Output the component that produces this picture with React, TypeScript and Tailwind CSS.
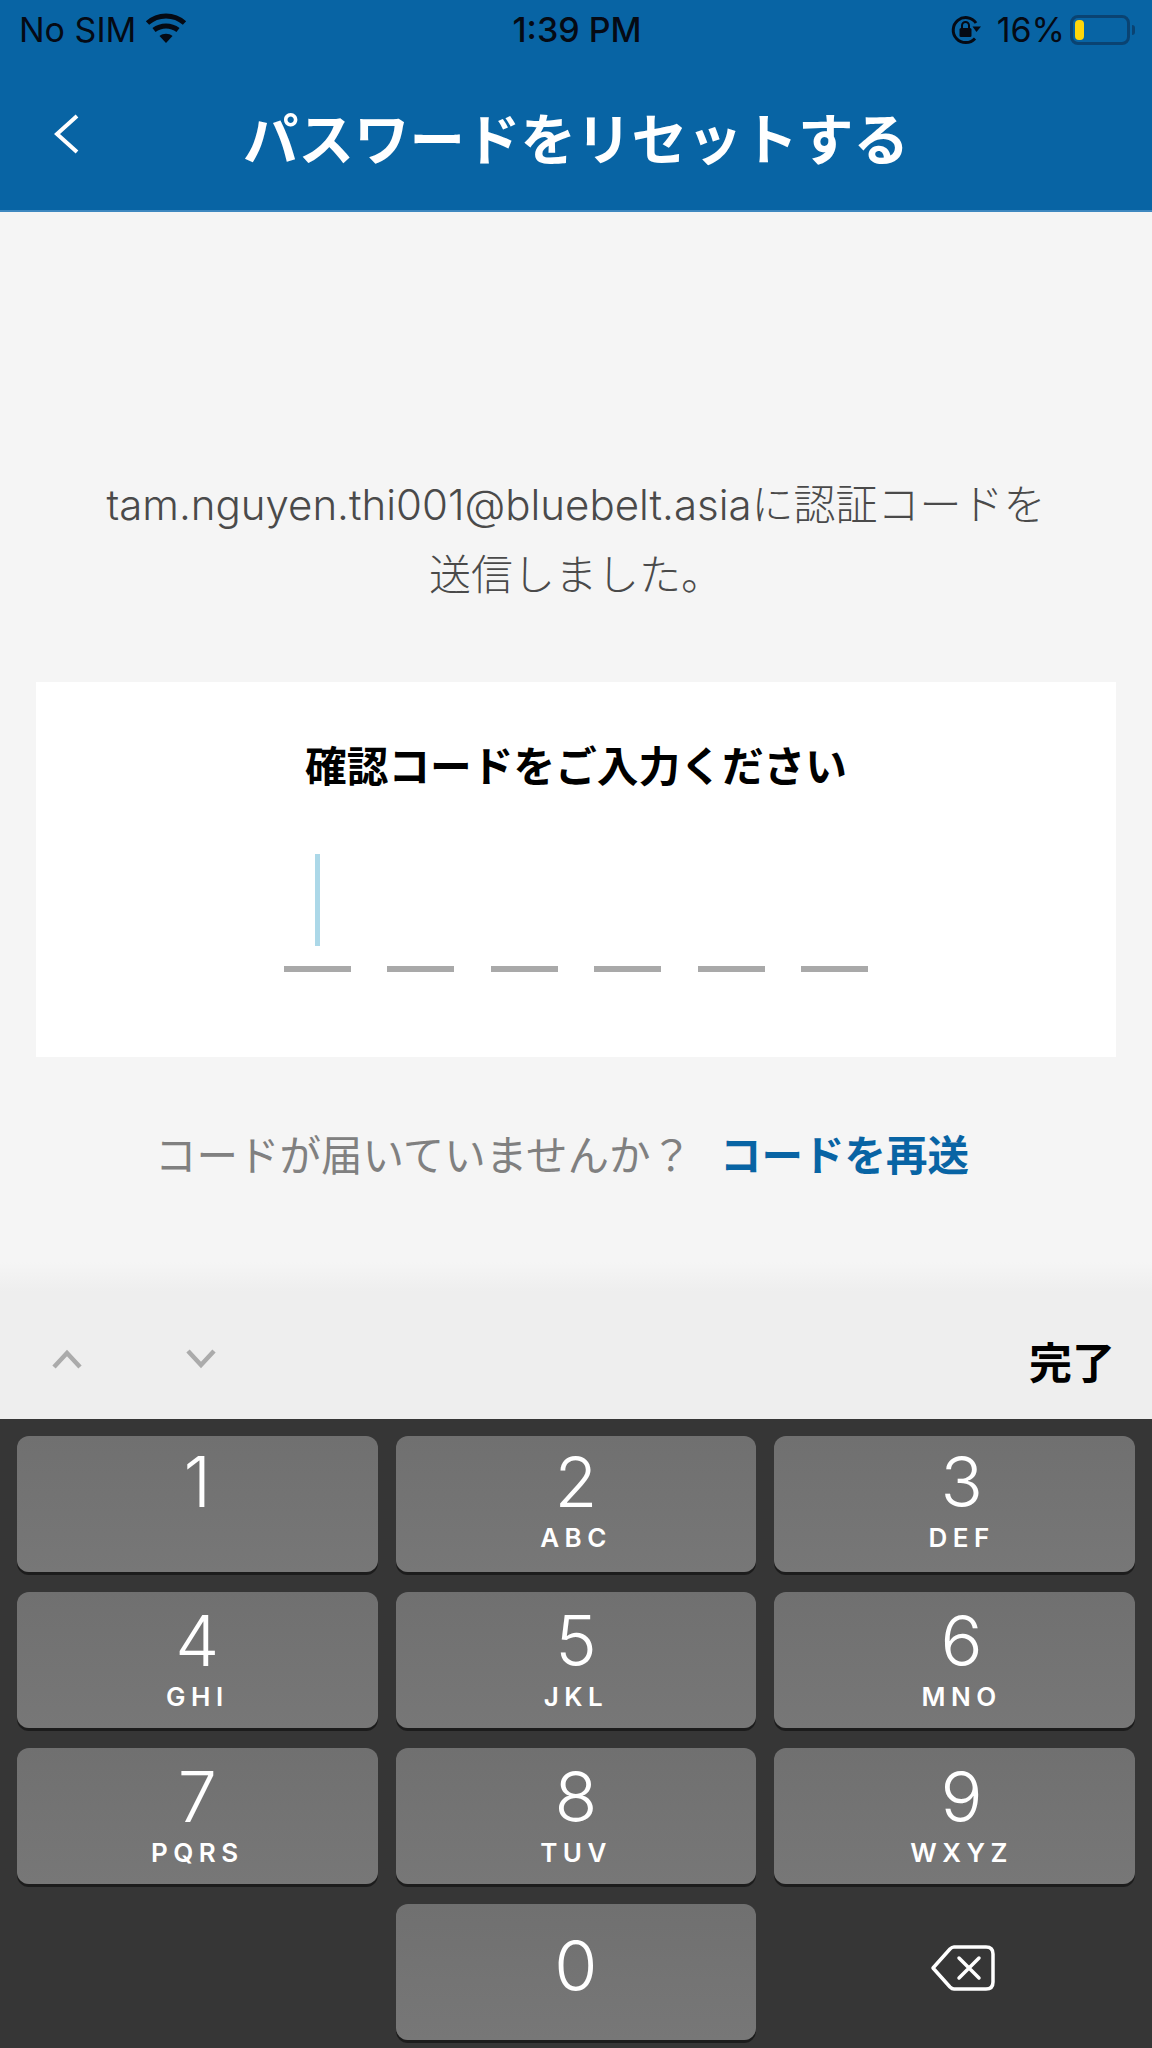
const font = { fontFamily: 'Inter, "Noto Sans CJK JP", sans-serif' };

function Wifi() {
  return (
    <svg className="mb-[5px]" width="42" height="32" viewBox="0 0 42 32" fill="none" stroke="#050a14" strokeWidth="5">
      <path d="M2.5 11 C13 1.5 29 1.5 39.5 11" />
      <path d="M9 18 C16 12.5 26 12.5 33 18" />
      <path d="M21 31 L14.5 24 C18 21 24 21 27.5 24 Z" fill="#050a14" stroke="none" />
    </svg>
  );
}

function RotationLock() {
  return (
    <svg width="32" height="32" viewBox="0 0 32 32" fill="none">
      <path d="M25 24.5 A12.5 12.5 0 1 1 26 9" stroke="#050a14" strokeWidth="3" />
      <path d="M22.5 12.5 L31 12.5 L26.5 18 Z" fill="#050a14" />
      <rect x="9.5" y="14" width="12" height="9" rx="1.5" fill="#050a14" />
      <path d="M12 14 V11.5 A3.5 3.5 0 0 1 19 11.5 V14" stroke="#050a14" strokeWidth="2" />
    </svg>
  );
}

function Battery() {
  return (
    <div className="flex items-center gap-[2px]">
      <div className="flex h-[30px] w-[60px] items-center rounded-[8px] border-[3px] border-[#0a4372] px-[2px]">
        <div className="h-[20px] w-[9px] rounded-[4px] bg-[#ffd60a]" />
      </div>
      <div className="h-[10px] w-[3px] rounded-r-[3px] bg-[#0a4372]" />
    </div>
  );
}

function Key({ d, l, className }: { d: string; l?: string; className: string }) {
  return (
    <div className={`flex h-[136px] flex-col items-center rounded-[12px] bg-gradient-to-b from-[#707070] to-[#777777] text-white shadow-[0_3px_0_#1c1c1c] ${className}`}>
      <div className="text-[70px] font-light leading-[70px]">{d}</div>
      {l && <div className="mt-[6px] text-[26px] font-semibold leading-[30px] tracking-[5.5px]">{l}</div>}
    </div>
  );
}

export default function App() {
  return (
    <div className="flex h-[2048px] w-[1152px] flex-col overflow-hidden bg-[#f5f5f5]" style={font}>
      <header className="h-[212px] border-b-2 border-[#3e88c0] bg-[#0864a4]">
        <div className="grid h-[60px] grid-cols-3 items-center pl-[19px] pr-[17px] text-[34px] leading-none text-[#050a14]">
          <div className="flex items-center gap-[9px]">
            <span>No SIM</span>
            <Wifi />
          </div>
          <div className="text-center font-medium">1:39 PM</div>
          <div className="flex items-center justify-end gap-[15px]">
            <RotationLock />
            <div className="flex items-center gap-[5px]">
              <span>16%</span>
              <Battery />
            </div>
          </div>
        </div>
        <div className="grid grid-cols-[1fr_auto_1fr] items-center px-[52px] pt-[44px]">
          <svg className="mb-[12px]" width="30" height="42" viewBox="0 0 30 42" fill="none" stroke="white" strokeWidth="4">
            <path d="M25 3 L5 21 L25 39" />
          </svg>
          <h1 className="text-[55.5px] font-bold leading-[72px] text-white">パスワードをリセットする</h1>
          <div />
        </div>
      </header>

      <main className="flex-1 px-[36px] pt-[258px]">
        <p className="text-center text-[42px] font-light leading-[70px] text-[#4a4a4a]">
          tam.nguyen.thi001@bluebelt.asiaに認証コードを
          <br />
          送信しました。
        </p>
        <section className="mt-[72px] flex h-[375px] flex-col items-center bg-white pt-[60px]">
          <h2 className="text-[41.7px] font-bold leading-[50px] text-black">確認コードをご入力ください</h2>
          <div className="mt-[62px] flex gap-[36.4px]">
            {[0, 1, 2, 3, 4, 5].map((i) => (
              <div key={i} className="flex w-[67px] flex-col items-center">
                <div className={`h-[92px] w-[5px] ${i === 0 ? 'bg-[#acd8e8]' : ''}`} />
                <div className="mt-[20px] h-[6px] w-[67px] bg-[#a9a9a9]" />
              </div>
            ))}
          </div>
        </section>
        <div className="mt-[69px] flex items-center justify-center gap-[28px] pr-[28px] leading-[60px]">
          <span className="text-[41.5px] text-[#808080]">コードが届いていませんか？</span>
          <span className="text-[41.5px] font-bold text-[#0864a4]">コードを再送</span>
        </div>
      </main>

      <div className="h-[30px] bg-gradient-to-b from-[#f5f5f5] to-[#eeeeee]" />
      <div className="flex h-[127px] items-center justify-between bg-[#eeeeee] pl-[52px] pr-[37px] pt-[6px]">
        <div className="flex items-center gap-[104px]">
          <svg width="30" height="20" viewBox="0 0 30 20" fill="none" stroke="#ababab" strokeWidth="4.5"><path d="M2 18 L15 4 L28 18" /></svg>
          <svg width="30" height="20" viewBox="0 0 30 20" fill="none" stroke="#ababab" strokeWidth="4.5"><path d="M2 2 L15 16 L28 2" /></svg>
        </div>
        <span className="mt-[8px] text-[43px] font-bold leading-[50px] text-black">完了</span>
      </div>

      <div className="h-[629px] bg-[#363636] px-[17px] pt-[17px]">
        <div className="grid grid-cols-3 gap-x-[18px] gap-y-[20px]">
          <Key className="pt-[11px]" d="1" />
          <Key className="pt-[11px]" d="2" l="ABC" />
          <Key className="pl-[14px] pt-[11px]" d="3" l="DEF" />
          <Key className="pt-[14px]" d="4" l="GHI" />
          <Key className="pt-[14px]" d="5" l="JKL" />
          <Key className="pl-[14px] pt-[14px]" d="6" l="MNO" />
          <Key className="pt-[14px]" d="7" l="PQRS" />
          <Key className="pt-[14px]" d="8" l="TUV" />
          <Key className="pl-[14px] pt-[14px]" d="9" l="WXYZ" />
          <div />
          <Key className="pt-[27px]" d="0" />
          <div className="flex items-center justify-center pb-[8px] pl-[16px]">
            <svg width="66" height="48" viewBox="0 0 66 48" fill="none" stroke="white" strokeWidth="3.5" strokeLinejoin="round">
              <path d="M24 3 H56 Q63 3 63 10 V38 Q63 45 56 45 H24 Q22 45 20 43 L3 24 L20 5 Q22 3 24 3 Z" />
              <path d="M29 14 L49 34 M49 14 L29 34" strokeLinecap="round" />
            </svg>
          </div>
        </div>
      </div>
    </div>
  );
}
